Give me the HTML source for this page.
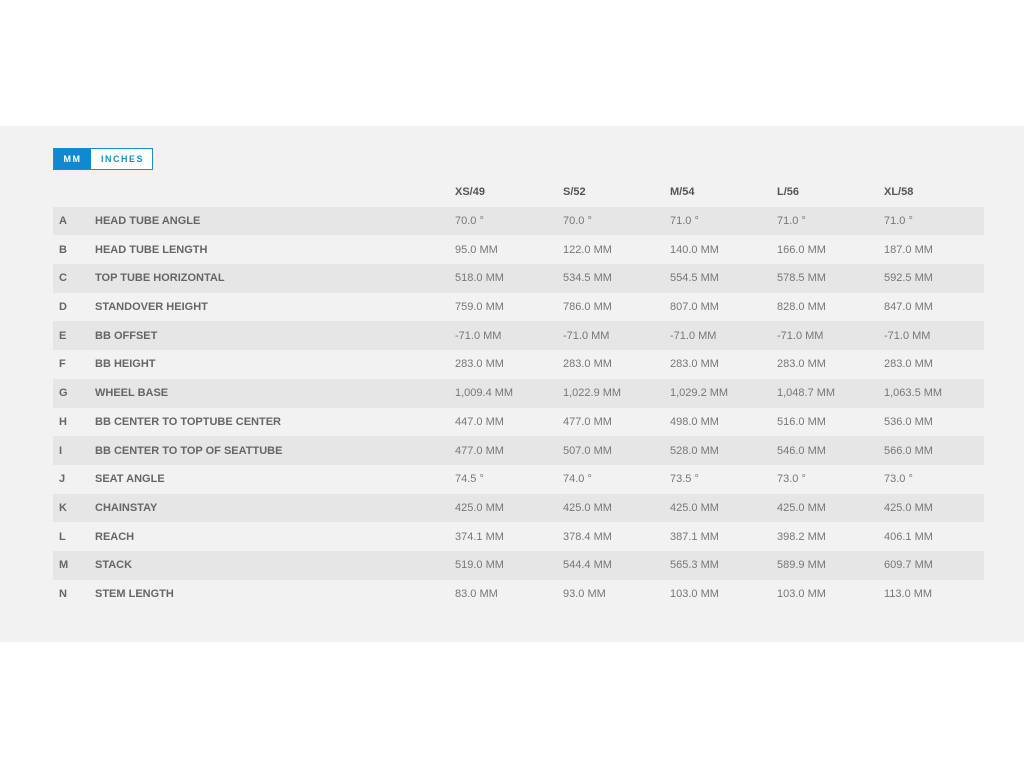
<!DOCTYPE html><html><head><style>
body{margin:0;background:#fff;font-family:"Liberation Sans",sans-serif;}
.band{position:absolute;left:0;top:126px;width:1024px;height:516px;background:#f2f2f2;}
.tog{position:absolute;left:53px;top:148px;width:98px;height:20px;border:1px solid #1a8fcf;background:#fff;font-size:9px;font-weight:bold;letter-spacing:1.5px;}
.tog span{position:absolute;top:0;line-height:20px;}
.mm{left:0;width:37px;height:20px;background:#0e8bd0;color:#fff;text-align:center;}
.in{left:47px;color:#1a8fcf;}
table{position:absolute;left:53px;top:178px;width:931px;border-collapse:collapse;table-layout:fixed;font-size:11px;color:#666;}
td{height:28.7px;padding:0;white-space:nowrap;overflow:hidden;}
tr.h td{font-weight:bold;color:#555;}
tr:nth-child(even) td{background:#e6e6e6;}
td.l{padding-left:6px;font-weight:bold;}
td.n{font-weight:bold;color:#666;}
td.v{color:#777;}
</style></head><body>
<div class="band"></div>
<div class="tog"><span class="mm">MM</span><span class="in">INCHES</span></div>
<table>
<colgroup><col style="width:42px"><col style="width:360px"><col style="width:108px"><col style="width:107px"><col style="width:107px"><col style="width:107px"><col style="width:100px"></colgroup>
<tr class="h"><td class="l"></td><td class="n"></td><td>XS/49</td><td>S/52</td><td>M/54</td><td>L/56</td><td>XL/58</td></tr>
<tr><td class="l">A</td><td class="n">HEAD TUBE ANGLE</td><td class="v">70.0 °</td><td class="v">70.0 °</td><td class="v">71.0 °</td><td class="v">71.0 °</td><td class="v">71.0 °</td></tr>
<tr><td class="l">B</td><td class="n">HEAD TUBE LENGTH</td><td class="v">95.0 MM</td><td class="v">122.0 MM</td><td class="v">140.0 MM</td><td class="v">166.0 MM</td><td class="v">187.0 MM</td></tr>
<tr><td class="l">C</td><td class="n">TOP TUBE HORIZONTAL</td><td class="v">518.0 MM</td><td class="v">534.5 MM</td><td class="v">554.5 MM</td><td class="v">578.5 MM</td><td class="v">592.5 MM</td></tr>
<tr><td class="l">D</td><td class="n">STANDOVER HEIGHT</td><td class="v">759.0 MM</td><td class="v">786.0 MM</td><td class="v">807.0 MM</td><td class="v">828.0 MM</td><td class="v">847.0 MM</td></tr>
<tr><td class="l">E</td><td class="n">BB OFFSET</td><td class="v">-71.0 MM</td><td class="v">-71.0 MM</td><td class="v">-71.0 MM</td><td class="v">-71.0 MM</td><td class="v">-71.0 MM</td></tr>
<tr><td class="l">F</td><td class="n">BB HEIGHT</td><td class="v">283.0 MM</td><td class="v">283.0 MM</td><td class="v">283.0 MM</td><td class="v">283.0 MM</td><td class="v">283.0 MM</td></tr>
<tr><td class="l">G</td><td class="n">WHEEL BASE</td><td class="v">1,009.4 MM</td><td class="v">1,022.9 MM</td><td class="v">1,029.2 MM</td><td class="v">1,048.7 MM</td><td class="v">1,063.5 MM</td></tr>
<tr><td class="l">H</td><td class="n">BB CENTER TO TOPTUBE CENTER</td><td class="v">447.0 MM</td><td class="v">477.0 MM</td><td class="v">498.0 MM</td><td class="v">516.0 MM</td><td class="v">536.0 MM</td></tr>
<tr><td class="l">I</td><td class="n">BB CENTER TO TOP OF SEATTUBE</td><td class="v">477.0 MM</td><td class="v">507.0 MM</td><td class="v">528.0 MM</td><td class="v">546.0 MM</td><td class="v">566.0 MM</td></tr>
<tr><td class="l">J</td><td class="n">SEAT ANGLE</td><td class="v">74.5 °</td><td class="v">74.0 °</td><td class="v">73.5 °</td><td class="v">73.0 °</td><td class="v">73.0 °</td></tr>
<tr><td class="l">K</td><td class="n">CHAINSTAY</td><td class="v">425.0 MM</td><td class="v">425.0 MM</td><td class="v">425.0 MM</td><td class="v">425.0 MM</td><td class="v">425.0 MM</td></tr>
<tr><td class="l">L</td><td class="n">REACH</td><td class="v">374.1 MM</td><td class="v">378.4 MM</td><td class="v">387.1 MM</td><td class="v">398.2 MM</td><td class="v">406.1 MM</td></tr>
<tr><td class="l">M</td><td class="n">STACK</td><td class="v">519.0 MM</td><td class="v">544.4 MM</td><td class="v">565.3 MM</td><td class="v">589.9 MM</td><td class="v">609.7 MM</td></tr>
<tr><td class="l">N</td><td class="n">STEM LENGTH</td><td class="v">83.0 MM</td><td class="v">93.0 MM</td><td class="v">103.0 MM</td><td class="v">103.0 MM</td><td class="v">113.0 MM</td></tr>
</table>
</body></html>
